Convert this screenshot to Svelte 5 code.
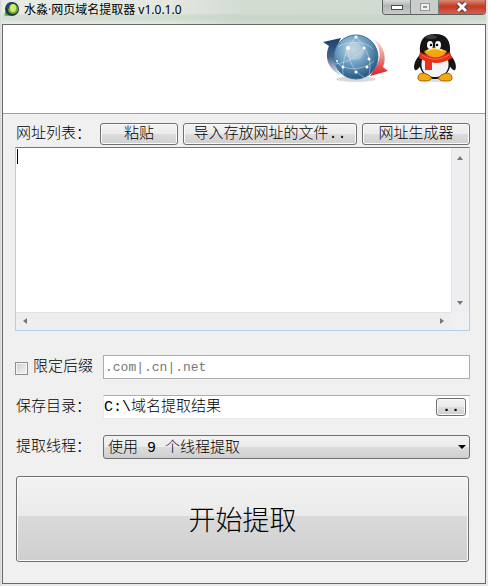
<script lang="ts">
  const threadOptions = [1, 3, 5, 7, 9, 12];

  let urls = $state('');
  let limitSuffix = $state(false);
  let suffixes = $state('');
  let folder = $state('C:\\域名提取结果');
  let threads = $state(9);
</script>

<div class="window">
  <header class="titlebar">
    <svg class="app-icon" viewBox="0 0 16 16" width="16" height="16">
      <path d="M3 9c-4 4-3 6 0 6l6-1z" fill="#59b92b" />
      <circle cx="8" cy="8" r="7" fill="#22344f" />
      <circle cx="9" cy="8" r="5" fill="#6eb52a" />
      <ellipse cx="9" cy="7" rx="3" ry="4" fill="#d3ec6c" />
      <path d="M3 3c2-2 5-2 6-1L6 4 4 9C2 7 2 5 3 3z" fill="#26466d" />
    </svg>
    <h1 class="title">水淼·网页域名提取器 v1.0.1.0</h1>
    <div class="controls">
      <button class="control" aria-label="最小化">
        <svg viewBox="0 0 14 8" width="14" height="8">
          <rect x="1.5" y="2.5" width="11" height="4" fill="#fff" stroke="#454c54" />
        </svg>
      </button>
      <button class="control disabled" aria-label="最大化" disabled>
        <svg viewBox="0 0 12 10" width="12" height="10">
          <rect x="1.5" y="1.5" width="9" height="7" fill="#eee" stroke="#92979b" />
          <rect x="4.5" y="4.5" width="3" height="1" fill="#bbb" stroke="#92979b" />
        </svg>
      </button>
      <button class="control close" aria-label="关闭">
        <svg viewBox="0 0 14 12" width="14" height="12">
          <path d="M3 2l8 8M11 2l-8 8" stroke="#5c3437" stroke-width="5" />
          <path d="M3 2l8 8M11 2l-8 8" stroke="#fff" stroke-width="3" />
        </svg>
      </button>
    </div>
  </header>

  <main class="client">
    <div class="banner">
      <a href="#update" aria-label="更新">
        <svg viewBox="0 0 66 50" width="66" height="50">
          <defs>
            <radialGradient id="globe" cx="42%" cy="32%" r="68%">
              <stop offset="0" stop-color="#c3d9e6" />
              <stop offset="0.5" stop-color="#6f9fc1" />
              <stop offset="1" stop-color="#235783" />
            </radialGradient>
            <linearGradient id="blue-arrow" x1="0" y1="0" x2="0" y2="1">
              <stop offset="0" stop-color="#193e70" />
              <stop offset="0.5" stop-color="#456689" />
              <stop offset="1" stop-color="#e6ebf0" />
            </linearGradient>
            <linearGradient id="red-arrow" x1="0" y1="0" x2="0" y2="1">
              <stop offset="0" stop-color="#f7e1df" />
              <stop offset="0.5" stop-color="#ed8983" />
              <stop offset="1" stop-color="#dc1922" />
            </linearGradient>
          </defs>
          <ellipse cx="33" cy="46" rx="20" ry="3" fill="#d9d9d9" />
          <path d="M0 9 18 5 14 13C9 22 10 34 19 43 5 37 1 24 6 13z" fill="url(#blue-arrow)" />
          <path d="M51 6C61 13 64 24 60 34l5 4-18 5 5-8c7-9 6-19-1-29z" fill="url(#red-arrow)" />
          <circle cx="33" cy="24" r="22" fill="url(#globe)" stroke="#427197" />
          <path d="M23 14c3-5 10-6 14-3l5 8-5 7-8 1-7-5z" fill="#c2d4dd" opacity=".55" />
          <g fill="none" stroke="#dceffc" stroke-width=".6" opacity=".8">
            <path d="M15 14c8-5 25-8 35 2M12 31c12-1 20-7 29-15M20 42c-1-13 2-25 13-38M33 4c13 13 16 27 13 37" />
            <path d="M14 29c6 8 24 10 37-1M25 15c1 14 5 23 17 30" />
          </g>
          <g fill="#fff">
            <circle cx="33" cy="4" r="1.5" />
            <circle cx="25" cy="15" r="2" />
            <circle cx="41" cy="15" r="1.5" />
            <circle cx="46" cy="26" r="1.5" />
            <circle cx="20" cy="34" r="1.5" />
            <circle cx="33" cy="39" r="1.5" />
            <circle cx="44" cy="34" r="1.5" />
            <circle cx="14" cy="28" r="1" />
          </g>
        </svg>
      </a>
      <a href="#qq" aria-label="QQ">
        <svg viewBox="0 0 44 50" width="44" height="50">
          <ellipse cx="22" cy="46" rx="17" ry="3" fill="#ddd" />
          <path d="M7 22C1 27 0 35 2 37c2 1 4-2 6-5zM37 22c6 5 7 13 5 15-2 1-4-2-6-5z" fill="#171719" />
          <path d="M22 1C10 1 6 8 7 20 3 36 12 46 22 46s19-10 15-26C38 8 34 1 22 1z" fill="#151516" />
          <path d="M10 24c-5 13 3 20 12 20s17-7 12-20z" fill="#f3f4f5" />
          <path d="M5 45c0-6 7-6 12-2 3 3 0 5-5 5-4 0-7 0-7-3zM39 45c0-6-7-6-12-2-3 3 0 5 5 5 4 0 7 0 7-3z" fill="#f3a912" stroke="#a65e0a" />
          <path d="M7 19c8 5 22 5 30 0l2 6c-7 5-18 6-20 4l0 8h-7v-9l-6-3z" fill="#e7301e" />
          <path d="M9 22c9 6 19 5 27 0" fill="none" stroke="#ff694d" />
          <path d="M11 19c5-5 18-5 23 0-6 7-17 7-23 0z" fill="#f5a313" />
          <path d="M14 18c5-3 11-3 16 0" fill="none" stroke="#ffdf51" stroke-width="2" />
          <ellipse cx="17" cy="12" rx="3" ry="4" fill="#fff" />
          <ellipse cx="25" cy="12" rx="3" ry="4" fill="#fff" />
          <circle cx="18" cy="12" r="1.3" fill="#111" />
          <circle cx="24" cy="12" r="1.3" fill="#111" />
          <ellipse cx="18" cy="4" rx="6" ry="2" fill="#555" opacity=".6" />
        </svg>
      </a>
    </div>

    <form class="form" onsubmit={(e) => e.preventDefault()}>
      <div class="list-bar">
        <label for="urls">网址列表：</label>
        <button type="button" class="button">粘贴</button>
        <button type="button" class="button">导入存放网址的文件..</button>
        <button type="button" class="button">网址生成器</button>
      </div>

      <div class="memo">
        <textarea id="urls" wrap="off" bind:value={urls}></textarea>
        <div class="scroll vertical" aria-hidden="true">
          <svg viewBox="0 0 8 5" width="8" height="5"><path d="M1 5 4 1l3 4z" /></svg>
          <svg viewBox="0 0 8 5" width="8" height="5"><path d="M1 0h6L4 4z" /></svg>
        </div>
        <div class="scroll horizontal" aria-hidden="true">
          <svg viewBox="0 0 5 8" width="5" height="8"><path d="M5 1v6L1 4z" /></svg>
          <svg viewBox="0 0 5 8" width="5" height="8"><path d="M0 1l4 3-4 3z" /></svg>
        </div>
        <span class="caret"></span>
      </div>

      <div class="row">
        <label class="check">
          <input type="checkbox" bind:checked={limitSuffix} />
          限定后缀
        </label>
        <input class="field suffix" aria-label="后缀" placeholder=".com|.cn|.net" bind:value={suffixes} />
      </div>

      <div class="row">
        <label for="folder">保存目录：</label>
        <div class="field folder">
          <input id="folder" bind:value={folder} />
          <button type="button" class="button browse">..</button>
        </div>
      </div>

      <div class="row">
        <label for="threads">提取线程：</label>
        <div class="combo">
          <select id="threads" bind:value={threads}>
            {#each threadOptions as count}
              <option value={count}>使用 {count} 个线程提取</option>
            {/each}
          </select>
          <svg viewBox="0 0 8 4" width="8" height="4"><path d="M0 0h8L4 4z" /></svg>
        </div>
      </div>

      <button type="submit" class="start">开始提取</button>
    </form>
  </main>
</div>

<style>
  :global(body) {
    margin: 0;
    background: #e6e8e6;
  }

  .window {
    box-sizing: border-box;
    padding: 0 2px 2px;
    font: 300 15px/22px 'Liberation Mono', 'Noto Sans CJK SC', monospace;
    color: #000;
    background: linear-gradient(90deg, #d3d5d3, #e8e9e8 2px, #e8e8e9);
  }

  .titlebar {
    display: flex;
    align-items: flex-start;
    height: 24px;
    padding-left: 2px;
    background:
      linear-gradient(transparent 55%, #b9cdb966 65%, #b9cdb966 80%, transparent),
      linear-gradient(90deg, #e8ebe6, #e3e8e1 35%, #d3dbd2 50%, #d2dad1 80%, #dde3dc);
  }

  .app-icon {
    margin-top: 1px;
  }

  .title {
    margin: 0 auto 0 4px;
    font: 12px/20px 'Noto Sans', 'Noto Sans CJK SC', sans-serif;
  }

  .controls {
    display: flex;
    border: 1px solid #5c6060;
    border-top: 0;
    border-radius: 0 0 4px 4px;
    overflow: hidden;
  }

  .control {
    display: flex;
    align-items: center;
    justify-content: center;
    width: 28px;
    height: 14px;
    padding: 0;
    border: 0;
    border-right: 1px solid #777c7c;
    background: linear-gradient(#d9dcda, #b1b6b4 40%, #c8cdca);
  }

  .control.disabled {
    background: #c9cecb;
  }

  .control.close {
    width: 46px;
    border-right: 0;
    background: linear-gradient(#d98a78, #c23b25 45%, #d4604a);
  }

  .client {
    border: 1px solid #686a6a;
    background: #f0f0f0;
  }

  .banner {
    display: flex;
    justify-content: flex-end;
    gap: 24px;
    height: 89px;
    box-sizing: border-box;
    padding: 8px 28px 0 0;
    border-bottom: 1px solid #a0a0a0;
    background: #fff;
  }

  .form {
    display: flex;
    flex-direction: column;
    gap: 16px;
    padding: 9px 15px 21px 12px;
  }

  .list-bar {
    display: grid;
    grid-template-columns: 80px 78fr 174fr 108fr;
    gap: 5px;
    margin-bottom: -14px;
  }

  .button {
    height: 22px;
    padding: 2px 0 0;
    border: 1px solid #707070;
    border-radius: 3px;
    background: linear-gradient(#f3f3f3, #ebebeb 50%, #dddddd 50%, #cfcfcf);
    box-shadow: inset 0 0 0 1px #fafafa;
    font: inherit;
    line-height: 18px;
    white-space: nowrap;
  }

  .memo {
    position: relative;
    display: grid;
    grid-template-columns: 1fr 18px;
    grid-template-rows: 164px 18px;
    border: 1px solid #b5cfe7;
    border-top-color: #5b7a96;
    margin-bottom: 8px;
    background: #eef0f3;
  }

  .memo textarea {
    box-sizing: border-box;
    width: 100%;
    height: 100%;
    padding: 1px 2px;
    border: 0;
    outline: 0;
    resize: none;
    overflow: hidden;
    background: #fff;
    font: inherit;
  }

  .scroll {
    display: flex;
    justify-content: space-between;
    align-items: center;
    fill: #77777b;
    background: #eeeef1;
  }

  .vertical {
    flex-direction: column;
    padding: 7px 0 6px;
    box-shadow: inset 1px 0 #e2e2e4;
  }

  .horizontal {
    padding: 0 6px;
    box-shadow: inset 0 1px #e2e2e4;
  }

  .caret {
    position: absolute;
    left: 1px;
    top: 1px;
    width: 1px;
    height: 15px;
    background: #000;
  }

  .row {
    display: grid;
    grid-template-columns: 88px 1fr;
    align-items: center;
  }

  label {
    padding: 2px 0 0 1px;
    line-height: 20px;
    white-space: nowrap;
  }

  .check {
    display: flex;
    align-items: center;
    gap: 5px;
    padding-left: 0;
  }

  .check input {
    appearance: none;
    width: 13px;
    height: 13px;
    margin: 0;
    border: 1px solid #8e8f8f;
    background: linear-gradient(135deg, #cbcfd5, #f6f6f6);
    box-shadow: inset 0 0 0 1px #f4f4f4;
  }

  .check input:checked {
    background: #4b6097;
  }

  .field {
    box-sizing: border-box;
    width: 100%;
    height: 24px;
    background: #fff;
  }

  .suffix {
    padding: 0 1px;
    border: 1px solid #abadb3;
    font: 13px/22px 'Liberation Mono', 'Noto Sans CJK SC', monospace;
  }

  .suffix::placeholder {
    color: #787878;
    opacity: 1;
  }

  .folder {
    display: flex;
    align-items: center;
    padding-right: 3px;
    border: 1px solid #e3e9ef;
    border-top-color: #abadb3;
  }

  .folder input {
    flex: 1;
    min-width: 0;
    height: 22px;
    box-sizing: border-box;
    padding: 2px 0 0;
    border: 0;
    outline: 0;
    background: none;
    font: inherit;
  }

  .browse {
    width: 30px;
    height: 18px;
    line-height: 14px;
    font-weight: bold;
  }

  .combo {
    position: relative;
  }

  .combo select {
    display: block;
    appearance: none;
    width: 100%;
    height: 24px;
    padding: 2px 20px 0 4px;
    border: 1px solid #707070;
    border-radius: 3px;
    background: linear-gradient(#f2f2f2, #ebebeb 50%, #dddddd 50%, #cfcfcf);
    color: #000;
    font: inherit;
  }

  .combo svg {
    position: absolute;
    right: 4px;
    top: 10px;
    pointer-events: none;
  }

  .start {
    height: 86px;
    margin: 1px 1px 0;
    border: 1px solid #707070;
    border-radius: 3px;
    background: linear-gradient(#f2f2f2, #ebebeb 46%, #dadada 46%, #cfcfcf);
    box-shadow: inset 0 0 0 1px #fafafa;
    font: 300 27px/40px 'Noto Sans CJK SC', sans-serif;
  }
</style>
